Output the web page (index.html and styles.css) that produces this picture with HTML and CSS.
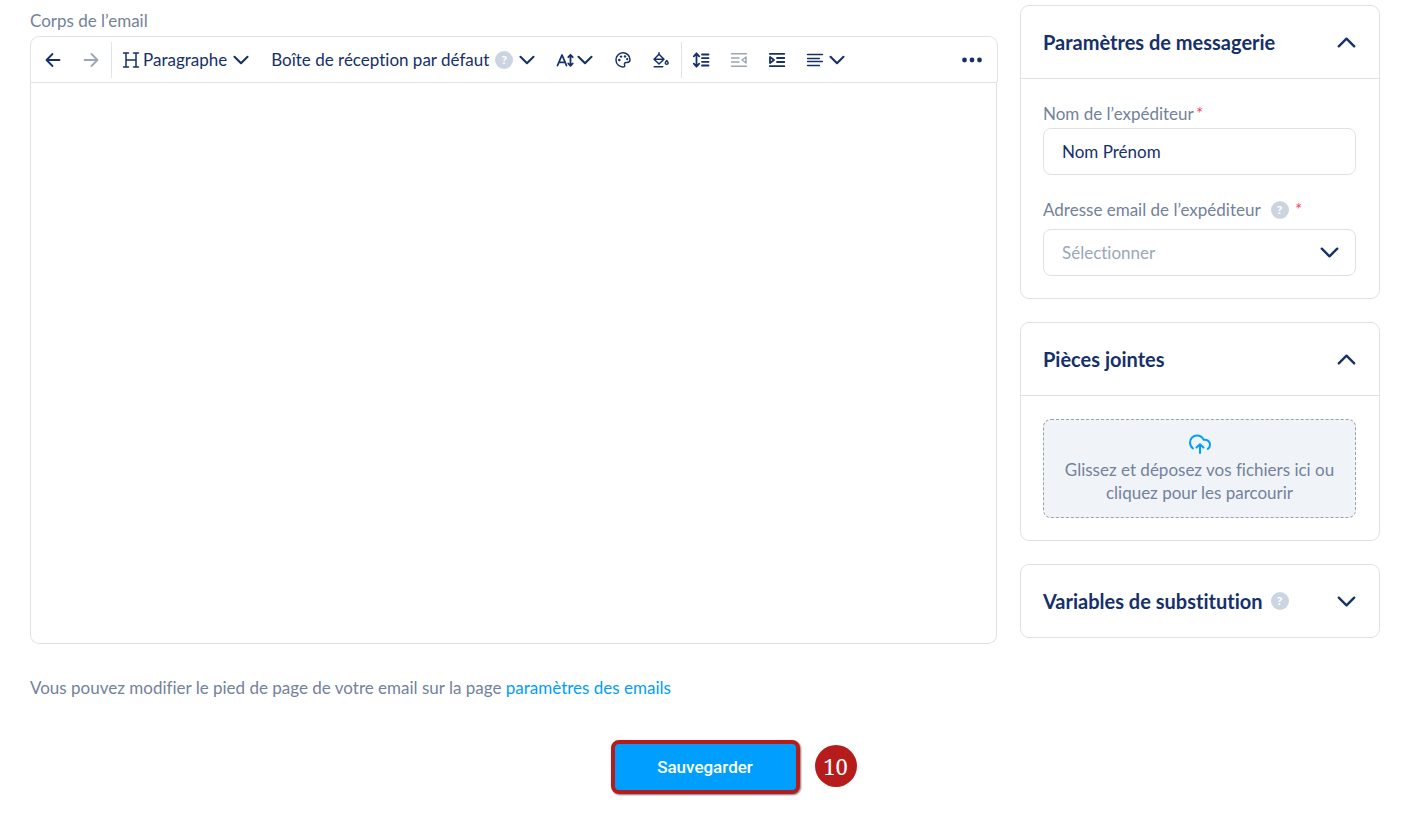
FILE: index.html
```html
<!DOCTYPE html>
<html lang="fr">
<head>
<meta charset="utf-8">
<meta name="viewport" content="width=device-width, initial-scale=1">
<title>Modèle d'email</title>
<link rel="stylesheet" href="styles.css">
</head>
<body>
<svg class="defs" aria-hidden="true">
  <symbol id="chevron" viewBox="0 0 16 16"><path d="M1.5 4.8 8 11.2l6.500-6.400"/></symbol>
</svg>
<form class="page">
  <div class="columns">
    <main class="main">
      <label class="label body-label" for="body">Corps de l’email</label>
      <div class="toolbar" role="toolbar" aria-label="Mise en forme">
        <button type="button" class="tool tool-first" aria-label="Annuler"><svg class="icon" viewBox="0 0 16 16"><path class="thick" d="M14.500 8H1.500M7.500 2 1.500 8l6 6"/></svg></button>
        <button type="button" class="tool" aria-label="Rétablir" disabled><svg class="icon" viewBox="0 0 16 16"><path class="thick" d="M1.500 8h13M8.500 2l6 6-6 6"/></svg></button>
        <span class="divider"></span>
        <button type="button" class="tool style-tool" aria-haspopup="listbox"><svg class="icon" viewBox="0 0 16 16"><path d="M.5 1h5M10.500 1h5M.5 15h5M10.500 15h5M3 1v14M13 1v14M3 8h10"/></svg><span>Paragraphe</span><svg class="icon chevron"><use href="#chevron"/></svg></button>
        <button type="button" class="tool font-tool" aria-haspopup="listbox"><span>Boîte de réception par défaut</span><span class="help">?</span><svg class="icon chevron font-chevron"><use href="#chevron"/></svg></button>
        <button type="button" class="tool size-tool" aria-label="Taille du texte"><svg class="icon" viewBox="0 0 16 16"><path class="thick" d="M.5 13.500 5 3l4.500 10.500M2 10.300h6M13.500 3v10.500M11.300 5.200l2.200-2.400 2.200 2.400M11.300 11.500l2.200 2.400 2.200-2.400"/></svg><svg class="icon chevron"><use href="#chevron"/></svg></button>
        <button type="button" class="tool" aria-label="Couleur du texte"><svg class="icon" viewBox="0 0 16 16"><path d="M9 14.800C4.500 15.500 1 12.300 1 8a7 7 0 0 1 14-.5c0 2.200-1.500 3-3.200 3-1.500-.2-2.700.6-2.300 1.900.3.900.8 1.900-.5 2.400Z"/><g class="solid"><circle cx="4.300" cy="8" r="1.300"/><circle cx="6" cy="4.600" r="1.200"/><circle cx="10" cy="4.400" r="1.200"/><circle cx="12.200" cy="7.200" r="1.100"/></g></svg></button>
        <button type="button" class="tool" aria-label="Couleur de fond"><svg class="icon" viewBox="0 0 16 16"><path d="M6 .8v2M6 2.300l5 5-5 4.700-5-4.700 5-5ZM1.200 7.300h9.600M1.200 14.800h8.500M13.700 8.500c2.400 2.600 1.400 3.700 0 3.700s-2.400-1.100 0-3.700Z"/></svg></button>
        <span class="divider"></span>
        <button type="button" class="tool tool-first" aria-label="Interligne"><svg class="icon" viewBox="0 0 16 16"><path class="thick" d="M3.500 1.800v12.400M.8 4.300l2.700-3 2.700 3M.8 11.700l2.700 3 2.700-3M9 2.500h6.500M9 6.200h6.500M9 9.800h6.500M9 13.500h6.500"/></svg></button>
        <button type="button" class="tool" aria-label="Diminuer le retrait" disabled><svg class="icon" viewBox="0 0 16 16"><path d="M.5 1.800h15M.5 6h7.500M.5 10h7.500M.5 14.200h15M15 5v6l-4-3 4-3Z"/></svg></button>
        <button type="button" class="tool" aria-label="Augmenter le retrait"><svg class="icon" viewBox="0 0 16 16"><path class="thick" d="M.8 1.800h14.500M8 6h7.300M8 10h7.300M.8 14.200h14.500M1 5v6l4-3-4-3Z"/></svg></button>
        <button type="button" class="tool align-tool" aria-label="Alignement"><svg class="icon thin" viewBox="0 0 16 16"><path d="M.5 2.500h15M.5 6.500h12M.5 9.500h15M.5 13.500h12"/></svg><svg class="icon chevron"><use href="#chevron"/></svg></button>
        <button type="button" class="tool more" aria-label="Plus d'options"><svg class="icon dots" viewBox="0 0 20 16"><g class="solid"><circle cx="2.500" cy="8" r="2.400"/><circle cx="10" cy="8" r="2.400"/><circle cx="17.500" cy="8" r="2.400"/></g></svg></button>
      </div>
      <textarea class="editor" id="body"></textarea>
      <p class="footnote">Vous pouvez modifier le pied de page de votre email sur la page <a href="#">paramètres des emails</a></p>
    </main>
    <aside class="side">
      <section class="card">
        <button type="button" class="card-head" aria-expanded="true"><span>Paramètres de messagerie</span><svg class="icon toggle open"><use href="#chevron"/></svg></button>
        <div class="card-body">
          <label class="label sender-label" for="sender">Nom de l’expéditeur<em class="required">*</em></label>
          <input class="field" id="sender" type="text" value="Nom Prénom">
          <label class="label address-label" for="address"><span>Adresse email de l’expéditeur</span><span class="help">?</span><em class="required">*</em></label>
          <div class="select-wrap">
            <select class="field" id="address"><option>Sélectionner</option></select>
            <svg class="icon toggle select-arrow"><use href="#chevron"/></svg>
          </div>
        </div>
      </section>
      <section class="card">
        <button type="button" class="card-head" aria-expanded="true"><span>Pièces jointes</span><svg class="icon toggle open"><use href="#chevron"/></svg></button>
        <div class="card-body">
          <button type="button" class="dropzone"><svg class="icon cloud" viewBox="0 0 22 20"><path d="M4 14.500C1.800 12.800 1 10.800 1 8.500A7 7 0 0 1 8 1.500c3.200 0 5.500 1.800 6.600 4.200 3.800-.3 6.400 1.800 6.400 5 0 1.700-.8 3.200-2.200 4.200M11 19v-8.500M7.500 13.500l3.500-3.300 3.500 3.300"/></svg><span>Glissez et déposez vos fichiers ici ou cliquez pour les parcourir</span></button>
        </div>
      </section>
      <section class="card">
        <button type="button" class="card-head" aria-expanded="false"><span>Variables de substitution</span><span class="help">?</span><svg class="icon toggle"><use href="#chevron"/></svg></button>
      </section>
    </aside>
  </div>
  <div class="actions">
    <div class="save-wrap">
      <button type="submit" class="save">Sauvegarder</button>
      <span class="step">10</span>
    </div>
  </div>
</form>
</body>
</html>
```
FILE: styles.css
```css
* { box-sizing: border-box; }
body {
  margin: 0;
  background: #fff;
  color: #15306a;
  font: 16px/23px Lato, "Open Sans", sans-serif;
  font-variant-ligatures: none;
}
button, input, select, textarea {
  font: inherit;
  font-variant-ligatures: none;
  color: inherit;
}
button { padding: 0; border: 0; background: none; cursor: pointer; }
.defs { display: none; }
.page { padding: 5px 32px 32px 30px; }
.columns {
  display: grid;
  grid-template-columns: minmax(0, 1fr) 360px;
  gap: 23px;
}
.main { display: flex; flex-direction: column; }
.label { display: block; color: #73829b; font-size: 17px; }
.body-label { padding: 4px 0; }
.icon {
  width: 16px;
  height: 16px;
  flex: none;
  fill: none;
  stroke: currentColor;
  stroke-width: 1.5;
  stroke-linecap: round;
  stroke-linejoin: round;
  overflow: visible;
}
.thick { stroke-width: 1.8; }
.thin { stroke-width: 1.3; }
.solid { fill: currentColor; stroke: none; }
.chevron { stroke-width: 2.1; }

.toolbar {
  display: flex;
  align-items: center;
  height: 47px;
  margin-right: -1px;
  border: 1px solid #dfe4e6;
  border-radius: 9px 9px 2px 0;
}
.tool {
  display: flex;
  align-items: center;
  height: 36px;
  margin-right: 22px;
  font-size: 17px;
  white-space: nowrap;
}
.tool:disabled { color: #9aa7b5; }
.tool-first { margin-left: 14px; }
.divider { width: 1px; height: 36px; margin-left: -10px; background: #dfe4e6; }
.divider + .tool-first { margin-left: 11px; }
.style-tool { gap: 4px; margin-left: 11px; }
.style-tool .chevron { margin-left: 2px; }
.font-tool { gap: 6px; }
.size-tool { gap: 4px; }
.align-tool { gap: 6px; }
.more { margin: 0 15px 0 auto; }
.dots { width: 20px; }
.help {
  display: inline-flex;
  align-items: center;
  justify-content: center;
  flex: none;
  width: 18px;
  height: 18px;
  border-radius: 50%;
  background: #cbd5e2;
  color: #fff;
  font-size: 12px;
  font-weight: 900;
  line-height: 18px;
}
.editor {
  display: block;
  width: 100%;
  height: 561px;
  padding: 16px;
  border: 1px solid #dfe2e5;
  border-top: 0;
  border-radius: 0 0 9px 9px;
  background: #fff;
  resize: none;
}
.footnote { margin: 32px 0 0; color: #73829b; font-size: 17px; }
.footnote a { color: #009dff; text-decoration: none; }

.side { display: flex; flex-direction: column; gap: 23px; }
.card { border: 1px solid #dfe2e5; border-radius: 9px; }
.card-head {
  display: flex;
  align-items: center;
  gap: 8px;
  width: 100%;
  height: 72px;
  padding: 0 23px 0 22px;
  font-size: 20px;
  font-weight: 700;
}
.toggle { width: 19px; height: 19px; margin-left: auto; stroke-width: 2; }
.open { transform: rotate(180deg); }
.card-body { padding: 23px 23px 22px 22px; border-top: 1px solid #dfe2e5; }
.required { margin-left: 2px; color: #ff3b6b; }
.sender-label { margin-bottom: 3px; }
.field {
  display: block;
  width: 100%;
  height: 47px;
  padding: 0 18px;
  border: 1px solid #dfe2e5;
  border-radius: 8px;
  background: #fff;
  font-size: 17px;
  appearance: none;
}
.address-label {
  display: flex;
  align-items: center;
  gap: 4px;
  margin: 23px 0 8px;
}
.address-label .help { margin-left: 6px; }
.select-wrap { position: relative; }
.select-wrap .field { color: #9aa7b8; }
.select-arrow { position: absolute; top: 14px; right: 17px; pointer-events: none; }
.dropzone {
  display: flex;
  flex-direction: column;
  align-items: center;
  gap: 4px;
  width: 100%;
  padding: 14px 20px 13px;
  border: 1px dashed #94a5b1;
  border-radius: 8px;
  background: #f0f4f9;
  color: #73829b;
  font-size: 17px;
}
.cloud { width: 22px; height: 20px; color: #009dff; stroke-width: 2; }

.actions { display: flex; justify-content: center; margin-top: 41px; }
.save-wrap { position: relative; }
.save {
  display: block;
  width: 189px;
  height: 54px;
  border: 4px solid #b71c1c;
  border-radius: 8px;
  background: #009fff;
  box-shadow: 1px 1px 2px #0008;
  color: #fff;
  font: 500 17px/23px Roboto, sans-serif;
}
.step {
  position: absolute;
  top: 5px;
  left: 100%;
  width: 42px;
  height: 42px;
  margin-left: 15px;
  border-radius: 50%;
  background: #b71c1c;
  color: #fff;
  font: 22px/42px "Noto Serif", "Liberation Serif", serif;
  text-align: center;
}
```
